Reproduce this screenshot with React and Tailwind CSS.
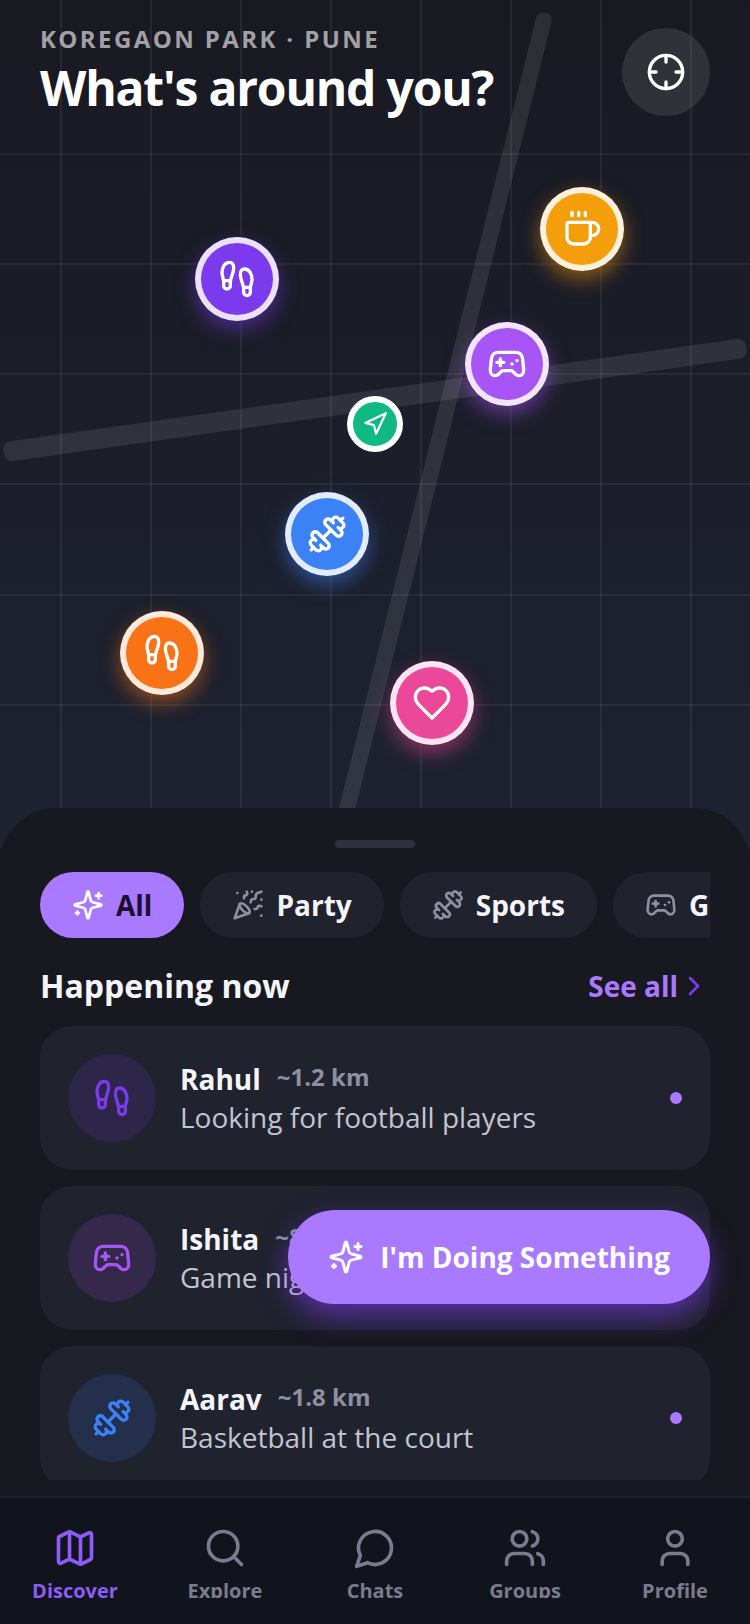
import React, { useState } from 'react';
import {
  ChevronRight,
  Coffee,
  Crosshair,
  Dumbbell,
  Footprints,
  Gamepad2,
  Map,
  Navigation,
  PartyPopper,
  Search,
  User,
} from 'lucide-react';

function Icon({ className, children }) {
  return (
    <svg
      className={className}
      viewBox="0 0 24 24"
      fill="none"
      stroke="currentColor"
      strokeWidth="2"
      strokeLinecap="round"
      strokeLinejoin="round"
      aria-hidden="true"
    >
      {children}
    </svg>
  );
}

function Sparkles({ className }) {
  return (
    <Icon className={className}>
      <path d="M9.937 15.5A2 2 0 0 0 8.5 14.063l-6.135-1.582a.5.5 0 0 1 0-.962L8.5 9.936A2 2 0 0 0 9.937 8.5l1.582-6.135a.5.5 0 0 1 .963 0L14.063 8.5A2 2 0 0 0 15.5 9.937l6.135 1.581a.5.5 0 0 1 0 .964L15.5 14.063a2 2 0 0 0-1.437 1.437l-1.582 6.135a.5.5 0 0 1-.963 0z" />
      <path d="M20 3v4M22 5h-4M4 17v2M5 18H3" />
    </Icon>
  );
}

function Heart({ className }) {
  return (
    <Icon className={className}>
      <path d="M19 14c1.49-1.46 3-3.21 3-5.5A5.5 5.5 0 0 0 16.5 3c-1.76 0-3 .5-4.5 2-1.5-1.5-2.74-2-4.5-2A5.5 5.5 0 0 0 2 8.5c0 2.3 1.5 4.05 3 5.5l7 7Z" />
    </Icon>
  );
}

function Chat({ className }) {
  return (
    <Icon className={className}>
      <path d="M7.9 20A9 9 0 1 0 4 16.1L2 22Z" />
    </Icon>
  );
}

function Users({ className }) {
  return (
    <Icon className={className}>
      <path d="M16 21v-2a4 4 0 0 0-4-4H6a4 4 0 0 0-4 4v2" />
      <circle cx="9" cy="7" r="4" />
      <path d="M22 21v-2a4 4 0 0 0-3-3.87M16 3.13a4 4 0 0 1 0 7.75" />
    </Icon>
  );
}

const columns = ['left-[8%]', 'left-[20%]', 'left-[32%]', 'left-[44%]', 'left-[56%]', 'left-[68%]', 'left-[80%]', 'left-[92%]'];
const rows = ['top-[18%]', 'top-[31%]', 'top-[44%]', 'top-[57%]', 'top-[70%]', 'top-[83%]'];

const pins = [
  { label: 'Walk', icon: Footprints, place: 'left-[26%] top-[28%]', color: '#7c3aed' },
  { label: 'Coffee', icon: Coffee, place: 'left-[72%] top-[22%]', color: '#f59e0b' },
  { label: 'Gaming', icon: Gamepad2, place: 'left-[62%] top-[38%]', color: '#a855f7' },
  { label: 'Sports', icon: Dumbbell, place: 'left-[38%] top-[58%]', color: '#3b82f6' },
  { label: 'Run', icon: Footprints, place: 'left-[16%] top-[72%]', color: '#f97316' },
  { label: 'Date', icon: Heart, place: 'left-[52%] top-[78%]', color: '#ec4899' },
];

const categories = [
  { label: 'All', icon: Sparkles },
  { label: 'Party', icon: PartyPopper },
  { label: 'Sports', icon: Dumbbell },
  { label: 'Gaming', icon: Gamepad2 },
];

const people = [
  { name: 'Rahul', distance: '~1.2 km', text: 'Looking for football players', icon: Footprints, tint: 'bg-[#2d2649] text-[#7c3aed]' },
  { name: 'Ishita', distance: '~800 m', text: 'Game night', icon: Gamepad2, tint: 'bg-[#34294b] text-[#a855f7]' },
  { name: 'Aarav', distance: '~1.8 km', text: 'Basketball at the court', icon: Dumbbell, tint: 'bg-[#24304b] text-[#3b82f6]' },
];

const tabs = [
  { label: 'Discover', icon: Map },
  { label: 'Explore', icon: Search },
  { label: 'Chats', icon: Chat },
  { label: 'Groups', icon: Users },
  { label: 'Profile', icon: User },
];

function MapView() {
  return (
    <section className="relative flex-1 overflow-hidden bg-linear-to-b from-[#191922] to-[#1e2231]">
      {columns.map((c) => (
        <div key={c} className={`absolute inset-y-0 w-[2px] bg-white/6 ${c}`} />
      ))}
      {rows.map((r) => (
        <div key={r} className={`absolute inset-x-0 h-[2px] bg-white/6 ${r}`} />
      ))}
      <div className="absolute inset-x-0 top-[46%] h-5 -rotate-8 rounded-lg bg-white/9" />
      <div className="absolute inset-y-0 left-[58%] w-4 rotate-14 rounded-lg bg-white/9" />

      {pins.map(({ label, icon: PinIcon, place, color }) => (
        <button
          key={label}
          aria-label={label}
          className={`absolute flex size-[84px] items-center justify-center rounded-full border-6 border-white/85 text-white ${place}`}
          style={{ backgroundColor: color, boxShadow: `0 8px 20px ${color}80` }}
        >
          <PinIcon className="size-10" />
        </button>
      ))}

      <div className="absolute top-1/2 left-1/2 flex size-14 -translate-1/2 items-center justify-center rounded-full border-6 border-white bg-[#10b981] text-white">
        <Navigation className="size-[26px]" />
      </div>

      <header className="relative flex items-center justify-between px-10 pt-[22px]">
        <div>
          <p className="text-[24px] leading-[33px] font-bold tracking-widest text-white/60">KOREGAON PARK · PUNE</p>
          <h1 className="text-[48px] leading-[66px] font-bold tracking-tight text-white">What's around you?</h1>
        </div>
        <button aria-label="Recenter" className="flex size-[88px] items-center justify-center rounded-full bg-white/10 text-white">
          <Crosshair className="size-10" />
        </button>
      </header>
    </section>
  );
}

export default function App() {
  const [category, setCategory] = useState('All');
  const [tab, setTab] = useState('Discover');

  return (
    <div className="flex h-screen flex-col overflow-hidden bg-[#181820] font-['Open_Sans',sans-serif] text-[#f4f4fb]">
      <MapView />

      <main className="relative -mt-10 rounded-t-[56px] bg-[#181820] px-10 pt-8 pb-4">
        <div className="mx-auto mb-6 h-2 w-20 rounded-full bg-[#2e2f40]" />

        <div className="flex gap-4 overflow-x-auto [scrollbar-width:none]">
          {categories.map(({ label, icon: ChipIcon }) => (
            <button
              key={label}
              onClick={() => setCategory(label)}
              className={`flex shrink-0 items-center gap-3 rounded-full px-8 py-[14px] text-[28px] leading-[38px] font-bold ${category === label ? 'bg-[#a97aff] text-[#1a1030]' : 'bg-[#20222e]'}`}
            >
              <ChipIcon className={`size-8 ${category === label ? 'text-white' : 'text-[#8e90a1]'}`} />
              {label}
            </button>
          ))}
        </div>

        <div className="mt-6 mb-4 flex h-12 items-center justify-between">
          <h2 className="text-[32px] leading-[44px] font-bold">Happening now</h2>
          <a href="#all" className="flex items-center text-[28px] leading-[38px] font-bold text-[#a97aff]">
            See all
            <ChevronRight className="size-8 text-[#7c3aed]" />
          </a>
        </div>

        <ul className="flex max-h-[454px] flex-col gap-4 overflow-y-auto [scrollbar-width:none]">
          {people.map(({ name, distance, text, icon: PersonIcon, tint }) => (
            <li key={name} className="flex shrink-0 items-center gap-6 rounded-[32px] bg-[#20222e] p-7">
              <div className={`flex size-[88px] items-center justify-center rounded-full ${tint}`}>
                <PersonIcon className="size-10" />
              </div>
              <div className="flex-1">
                <div className="flex items-start gap-4">
                  <h3 className="text-[28px] leading-[38px] font-bold">{name}</h3>
                  <span className="text-[24px] leading-[33px] font-bold text-[#8e90a1]">{distance}</span>
                </div>
                <p className="text-[28px] leading-[38px] text-[#c3c4d1]">{text}</p>
              </div>
              <span className="size-3 rounded-full bg-[#a97aff]" />
            </li>
          ))}
        </ul>

        <button className="absolute right-10 bottom-48 flex items-center gap-4 rounded-full bg-[#a97aff] px-10 py-7 text-[28px] leading-[38px] font-bold text-white shadow-[0_12px_28px_rgba(124,58,237,0.6)]">
          <Sparkles className="size-9" />
          I'm Doing Something
        </button>
      </main>

      <nav className="grid grid-cols-5 border-t-2 border-[#1e2130] bg-[#12141d] pt-7 pb-[26px]">
        {tabs.map(({ label, icon: TabIcon }) => (
          <a
            key={label}
            href={`#${label.toLowerCase()}`}
            onClick={() => setTab(label)}
            className={`flex flex-col items-center gap-[7px] ${tab === label ? 'text-[#8b5cf6]' : 'text-[#7a7b8e]'}`}
          >
            <TabIcon className="size-11" />
            <span className="h-[21px] overflow-hidden text-[20px] leading-[28px] font-bold">{label}</span>
          </a>
        ))}
      </nav>
    </div>
  );
}
